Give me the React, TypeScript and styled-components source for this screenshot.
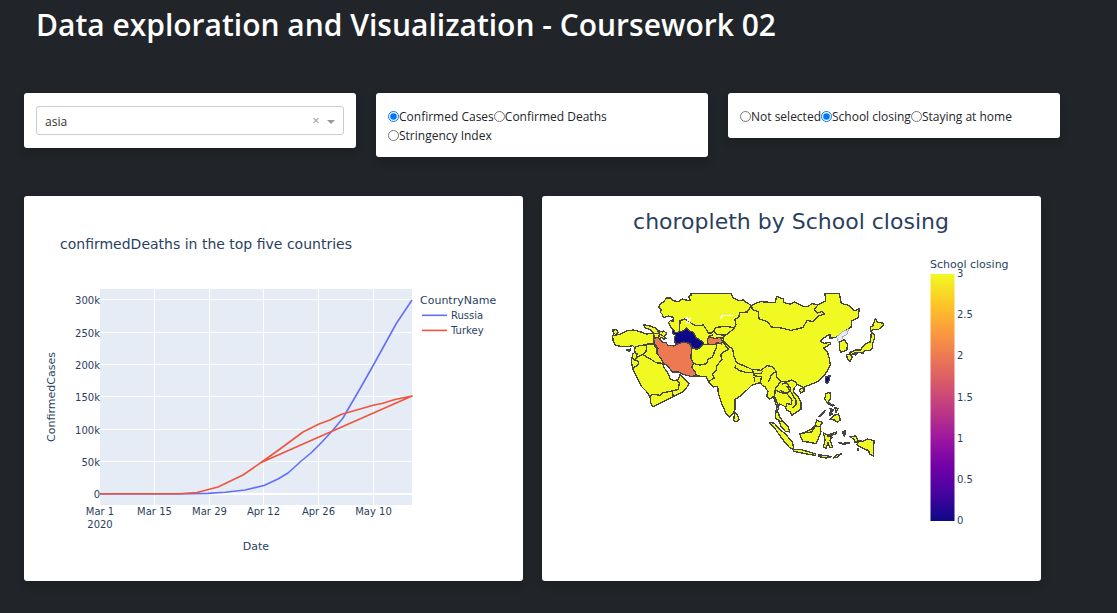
import React, { useState } from "react";
import styled, { createGlobalStyle } from "styled-components";

const GlobalStyle = createGlobalStyle`
  * { box-sizing: border-box; }
  body {
    margin: 0;
    background: #212529;
    color: #212529;
    font-family: "Open Sans", "Noto Sans", sans-serif;
    font-size: 12px;
    line-height: 19px;
  }
`;

const Page = styled.main`
  padding: 0 57px 32px 24px;
`;

const Title = styled.h1`
  margin: 0 0 43px;
  padding: 0 12px;
  color: #fff;
  font-size: 30px;
  font-weight: 600;
  line-height: 50px;
`;

const Controls = styled.div`
  display: grid;
  grid-template-columns: repeat(3, 1fr);
  gap: 20px;
  align-items: start;
`;

const Charts = styled.div`
  display: grid;
  grid-template-columns: repeat(2, 1fr);
  gap: 19px;
  margin: 39px 19px 0 0;
`;

const Card = styled.section`
  background: #fff;
  border-radius: 3px;
  box-shadow: 0 4px 10px rgba(0, 0, 0, 0.2);
`;

const ControlCard = styled(Card)`
  padding: 13px 12px;
`;

const SelectBox = styled.div`
  display: flex;
  align-items: center;
  position: relative;
  height: 29px;
  border: 1px solid #ccc;
  border-radius: 3px;
`;

const Select = styled.select`
  flex: 1;
  height: 27px;
  padding: 2px 48px 0 8px;
  border: 0;
  background: transparent;
  color: #333;
  font: inherit;
  appearance: none;
`;

const ClearButton = styled.button`
  position: absolute;
  right: 22px;
  padding: 0;
  border: 0;
  width: 10px;
  height: 17px;
  background: none;
  color: #999;
  font: inherit;
  font-size: 13px;
  line-height: 17px;
`;

const Caret = styled.span`
  position: absolute;
  right: 8px;
  top: 13px;
  border: 4px solid transparent;
  border-top-color: #999;
  border-bottom-width: 0;
  pointer-events: none;
`;

const RadioSet = styled.fieldset`
  display: flex;
  flex-wrap: wrap;
  margin: 0;
  padding: 1px 0 0;
  border: 0;
  min-width: 0;
  margin-bottom: -1px;
`;

const RadioLabel = styled.label`
  display: inline-flex;
  align-items: center;
  white-space: nowrap;
`;

const Radio = styled.input`
  width: 11px;
  height: 11px;
  margin: 0;
  accent-color: #0075ff;
`;

const Drawing = styled.svg`
  display: block;
  width: 100%;
  height: auto;
  font-family: Verdana, "DejaVu Sans", sans-serif;
  fill: #2a3f5f;
`;

const Country = styled.path<{ $fill?: string }>`
  fill: ${(p) => p.$fill ?? "#f0f921"};
  stroke: #444;
  stroke-width: 4;
  stroke-linejoin: round;
`;

const Border = styled.path`
  fill: none;
  stroke: #444;
  stroke-width: 4;
  stroke-linejoin: round;
`;

const Grid = styled.path`
  fill: none;
  stroke: #fff;
`;

const Trace = styled.path<{ $color: string }>`
  fill: none;
  stroke: ${(p) => p.$color};
  stroke-width: 1.6;
  stroke-linejoin: round;
`;

type Group = { name: string; options: string[]; initial: string };

function RadioGroup({ name, options, initial }: Group) {
  const [value, setValue] = useState(initial);
  return (
    <RadioSet aria-label={name}>
      {options.map((o) => (
        <RadioLabel key={o}>
          <Radio type="radio" name={name} checked={value === o} onChange={() => setValue(o)} />
          {o}
        </RadioLabel>
      ))}
    </RadioSet>
  );
}

const xTicks: [string, number][] = [
  ["Mar 1", 76], ["Mar 15", 130.5], ["Mar 29", 185.5], ["Apr 12", 239.5], ["Apr 26", 294.5], ["May 10", 349.5],
];
const yTicks: [string, number][] = [
  ["300k", 103.5], ["250k", 136.5], ["200k", 168.5], ["150k", 200.5], ["100k", 233.5], ["50k", 265.5], ["0", 298],
];

function LineChart() {
  return (
    <Drawing viewBox="0 0 499 385" role="img" aria-label="Confirmed cases by date">
      <text x="36" y="53" fontSize="14">confirmedDeaths in the top five countries</text>
      <rect x="76" y="93" width="312" height="216" fill="#e5ecf6" />
      {xTicks.slice(1).map(([t, x]) => <Grid key={t} d={`M${x} 93V309`} />)}
      {yTicks.map(([t, y]) => <Grid key={t} d={`M76 ${y}H388`} strokeWidth={t === "0" ? 2 : 1} />)}
      <Trace $color="#636efa" d="M76 298H155L184 297.4 201 296.3 221 294 240 289.5 254 283 264 277 274 268 276 266 287 257 298 246 309 234 319 222 323 215 337 191 350 168 372 128 388 104" />
      <Trace $color="#ef553b" d="M76 297.8H155L173 296.5 194 291 219 279 237 266.5 256 253 279 236 295 228 306 224 317 218.5 350 209 358 207.5 371 203.5 388 200 236 267" />
      <g fontSize="10">
        {xTicks.map(([t, x]) => <text key={t} x={x} y="319" textAnchor="middle">{t}</text>)}
        <text x="76" y="332" textAnchor="middle">2020</text>
        {yTicks.map(([t, y]) => <text key={t} x="76" y={y + 4} textAnchor="end">{t}</text>)}
        <text x="427" y="123">Russia</text>
        <text x="427" y="138">Turkey</text>
      </g>
      <g fontSize="11">
        <text x="232" y="354" textAnchor="middle">Date</text>
        <text transform="translate(31 201) rotate(-90)" textAnchor="middle">ConfirmedCases</text>
        <text x="396" y="108">CountryName</text>
      </g>
      <Trace $color="#636efa" d="M398 119.3H423" />
      <Trace $color="#ef553b" d="M398 134.4H423" />
    </Drawing>
  );
}

const scaleStops = ["#f0f921", "#fdca26", "#fb9f3a", "#ed7953", "#d8576b", "#bd3786", "#9c179e", "#7201a8", "#46039f", "#0d0887"];
const scaleLabels = ["3", "2.5", "2", "1.5", "1", "0.5", "0"];

function MapChart() {
  return (
    <Drawing viewBox="0 0 499 385" role="img" aria-label="Choropleth of Asia by school closing">
      <defs>
        <linearGradient id="plasma" x1="0" y1="0" x2="0" y2="1">
          {scaleStops.map((c, i) => <stop key={c} offset={i / 9} stopColor={c} />)}
        </linearGradient>
      </defs>
      <text x="249" y="33" fontSize="22" textAnchor="middle">choropleth by School closing</text>
      <g transform="translate(58 84) scale(.33333)" shapeRendering="crispEdges">
        {/* Turkey, Cyprus and the Caucasus */}
        <Country d="M38 150L50 149 54 158 44 166 60 163 70 158 82 152 100 150 120 155 140 162 160 160 165 172 160 192 150 190 135 195 118 197 104 203 98 197 80 200 60 199 46 195 40 185 38 170 42 162ZM79 210L93 207 88 214Z" />
        <Country d="M130 134L150 138 166 144 173 152 188 156 190 152 200 160 196 166 190 170 200 175 192 178 187 172 176 177 163 172 160 160 152 150 135 143ZM160 160L175 160 188 166M172 152L178 160 176 176" />
        {/* Levant and the Arabian peninsula */}
        <Country d="M108 200L118 197 135 195 160 192 170 205 170 220 185 235 188 250 193 264 202 277 208 288 211 298 225 302 235 298 240 284 247 291 268 310 262 320 250 334 232 344 220 350 185 368 158 380 152 370 150 350 140 335 125 320 115 300 98 266 94 245 98 222 105 217 104 206Z" />
        <Border d="M140 196L138 214 128 224 112 232 104 240 98 234M105 217L112 222 108 232M104 240L116 244 114 254 98 266M128 224L150 236 168 248 186 250M150 348L160 343 180 346 190 338 217 333 235 328 238 308 230 302M217 333L220 350" />
        {/* Kazakhstan, Uzbekistan and Kyrgyzstan */}
        <Country d="M205 128L211 122 219 124 220 112 206 108 190 113 187 103 180 96 184 90 177 83 178 74 190 66 200 54 212 54 218 62 235 65 247 57 258 60 272 62 266 50 273 46 272 41H393L400 54 416 62 430 60 440 68 454 76 442 96 420 98 416 112 404 118 408 134 402 146 390 156 378 165 362 176 345 196 315 193 288 205 225 160 217 148Z" />
        <Border d="M238 160L240 122 255 117 268 124 276 132 290 137 310 135 320 150 325 160 338 158 346 143 365 140 385 140 404 144M324 162L342 154 350 163 366 165 378 165M340 164L325 170 322 190" />
        {/* East, south and south-east mainland */}
        <Country d="M402 146L408 134 404 118 416 112 420 98 442 96 455 76 480 65 525 68 530 49 550 57 552 68 570 72 585 66 610 79 625 79 635 71 655 74 677 62 675 41H718L724 70 745 76 764 92 778 86 774 114 755 122 753 142 740 150 712 171 690 175 690 162 665 178 662 184 672 190 692 187 690 193 670 205 682 215 688 235 691 255 682 272 672 288 655 304 635 312 610 322 592 314 583 323 580 334 592 347 603 366 603 388 590 396 575 406 571 396 560 391 556 380 548 376 538 371 535 386 532 393 540 412 548 424 565 440 569 456 556 454 542 438 538 422 526 414 528 396 530 380 524 360 520 350 508 358 500 348 504 335 495 320 486 315 480 308 470 311 455 316 440 331 420 349 405 358 405 390 398 402 388 411 378 400 365 370 355 340 353 319 340 321 325 304 318 289 280 288 274 262 272 205 290 207 305 194 345 192 362 176 378 165Z" />
        {/* Mongolia, then the southern borders */}
        <Border d="M455 78L457 88 475 96 477 116 504 126 514 141 545 144 573 151 608 143 622 121 638 125 654 109 673 102 666 95 652 99 642 90 654 74" />
        <Border d="M326 192L348 190 350 200 344 214 338 230 324 238 320 251 300 255 278 250M348 190L368 186 386 208 370 216 362 224 366 238 350 258 350 270 337 284 343 294 325 305M368 172L372 186 388 200 398 206 402 230 410 248 426 255 443 262 455 268 484 271 500 257 518 260 528 274 514 284 506 305M407 256L405 263 420 272 440 278 456 278 458 270M462 272L460 282 484 280 487 274M460 287L484 290 481 308M462 290L464 306M528 274L530 290 542 305 526 326 524 350M542 305L560 306 574 300 588 306 592 314M545 312L560 310 572 324 570 334 558 340 540 330M528 330L542 338 560 340 576 360 574 374 560 370 558 380M560 318L576 340 588 362 588 375 576 384M524 350L532 370 530 390M535 424L546 424" />
        <Country $fill="#ed7953" d="M160 174L175 173 186 186 198 188 204 196 222 198 232 190 250 185 268 190 274 202 274 218 272 235 280 250 275 262 286 276 288 286 276 290 252 284 235 276 218 276 200 256 190 250 184 236 170 220 174 206 164 192Z" />
        <Country $fill="#ed7953" d="M322 178L328 171 345 175 360 172 368 184 364 192 352 188 342 194 322 192Z" />
        <Country $fill="#0d0887" d="M218 147L226 158 240 155 254 151 260 144 270 154 280 157 288 172 312 189 298 205 288 208 275 201 270 190 250 186 240 190 226 193 223 175 227 166 218 160Z" />
        <path d="M257 118L261 112 264 122 270 114 268 128 259 126M361 118L366 108 382 106 399 107" fill="none" stroke="#fff" strokeWidth="4" />
        {/* Korea, Japan and Taiwan */}
        <path d="M710 170L730 154 746 148 740 164 726 170 730 180 716 188Z" fill="#e5ecf6" stroke="#a9adb5" strokeWidth="3" />
        <Country d="M718 186L733 179 742 192 741 210 722 217 718 208Z" />
        <Country d="M826 117L834 127 850 130 850 135 835 149 818 148 812 155 811 142 818 138ZM814 156L823 163 823 175 818 190 818 205 810 212 795 211 790 219 775 218 755 224 748 218 768 210 782 210 788 200 800 190 810 187 813 170ZM740 224L752 224 757 231 750 244 742 238ZM758 220L775 218 766 225Z" />
        <Country $fill="#0d0887" d="M678 290L690 287 689 299 681 312 676 304Z" />
        {/* Sri Lanka and Hainan */}
        <Country d="M404 397L412 405 417 419 408 426 401 420ZM598 328L612 324 612 334 602 339Z" />
        {/* Philippines */}
        <Country d="M678 340L690 337 692 354 685 366 695 374 704 376 698 378 682 370 674 356ZM657 410L675 390 674 396 660 410ZM702 406L716 402 721 420 712 427 704 420 690 418ZM690 384L700 390 694 396ZM704 382L714 386 708 398ZM688 398L698 402 690 406Z" />
        {/* Indonesia and Borneo */}
        <Country d="M508 427L523 430 540 448 560 466 578 488 581 508 568 502 545 475 528 450ZM581 508L600 508 625 515 647 522 645 526 610 520 580 514ZM600 460L612 459 630 450 645 438 650 420 668 428 660 438 663 455 655 475 648 491 625 486 610 485 602 472Z" />
        <Border d="M604 460L635 456 646 438 662 440" />
        <Country d="M670 458L682 465 710 456 706 463 682 468 696 472 690 480 698 502 690 502 684 488 678 505 670 502 675 480ZM655 525L675 526 694 530 678 534 658 530ZM700 534L712 524 724 522 710 532ZM728 454L736 453 734 468 730 464ZM717 488L728 490 748 488 746 491 728 492ZM750 470L768 468 774 482 788 484 802 477 822 482 820 528 808 522 806 512 788 505 770 494 776 486 764 486 762 478ZM772 506L776 506 774 512Z" />
      </g>
      <text x="388" y="72" fontSize="11">School closing</text>
      <rect x="388.5" y="78" width="24" height="247" fill="url(#plasma)" />
      <g fontSize="10">
        {scaleLabels.map((t, i) => <text key={t} x="415" y={81 + i * 41.17}>{t}</text>)}
      </g>
    </Drawing>
  );
}

export default function App() {
  const [continent, setContinent] = useState("asia");
  return (
    <Page>
      <GlobalStyle />
      <Title>Data exploration and Visualization - Coursework 02</Title>
      <Controls>
        <ControlCard>
          <SelectBox>
            <Select aria-label="Continent" value={continent} onChange={(e) => setContinent(e.target.value)}>
              <option value=""></option>
              <option value="asia">asia</option>
            </Select>
            <ClearButton type="button" aria-label="Clear value" onClick={() => setContinent("")}>×</ClearButton>
            <Caret />
          </SelectBox>
        </ControlCard>
        <ControlCard>
          <RadioGroup name="Measure" options={["Confirmed Cases", "Confirmed Deaths", "Stringency Index"]} initial="Confirmed Cases" />
        </ControlCard>
        <ControlCard>
          <RadioGroup name="Policy" options={["Not selected", "School closing", "Staying at home"]} initial="School closing" />
        </ControlCard>
      </Controls>
      <Charts>
        <Card><LineChart /></Card>
        <Card><MapChart /></Card>
      </Charts>
    </Page>
  );
}
